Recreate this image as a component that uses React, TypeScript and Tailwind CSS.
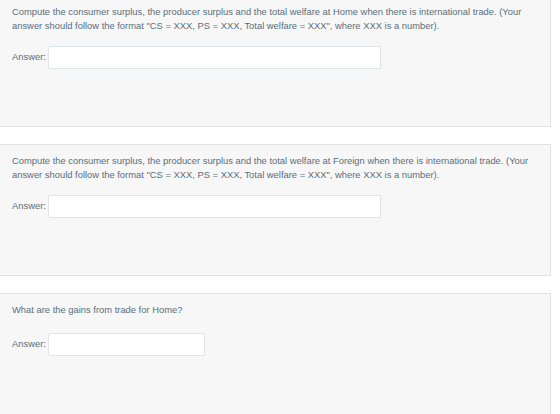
const FORMAT_NOTE =
  '(Your answer should follow the format "CS = XXX, PS = XXX, Total welfare = XXX", where XXX is a number).';

type Question = {
  id: string;
  prompt: string;
  inputWidth: string;
  gap: string;
};

const questions: Question[] = [
  {
    id: "q-home",
    prompt: `Compute the consumer surplus, the producer surplus and the total welfare at Home when there is international trade. ${FORMAT_NOTE}`,
    inputWidth: "w-[333px]",
    gap: "mt-[13px]",
  },
  {
    id: "q-foreign",
    prompt: `Compute the consumer surplus, the producer surplus and the total welfare at Foreign when there is international trade. ${FORMAT_NOTE}`,
    inputWidth: "w-[333px]",
    gap: "mt-[13px]",
  },
  {
    id: "q-gains",
    prompt: "What are the gains from trade for Home?",
    inputWidth: "w-[157px]",
    gap: "mt-[16px]",
  },
];

function QuestionCard({ q }: { q: Question }) {
  return (
    <div className="h-[132px] shrink-0 border-y border-r border-[#e2e2e2] bg-[#f7f7f7] pl-[12px] pr-[8px] pt-[9px]">
      <p className="text-[9.4px] leading-[14px] text-[#5a6d7a]">{q.prompt}</p>
      <div className={`${q.gap} flex items-center gap-[2px]`}>
        <label htmlFor={q.id} className="text-[9.4px] text-[#5a6d7a]">
          Answer:
        </label>
        <input
          id={q.id}
          type="text"
          className={`h-[23px] ${q.inputWidth} rounded-[2px] border border-[#dfe4e8] bg-white px-1 text-[10px] outline-none`}
        />
      </div>
    </div>
  );
}

export default function App() {
  return (
    <div
      className="h-[414px] w-[560px] overflow-hidden bg-white"
      style={{ fontFamily: '"Liberation Sans", Arial, sans-serif' }}
    >
      <div className="-mt-[5px] flex w-[551px] flex-col gap-[17px]">
        {questions.map((q) => (
          <QuestionCard key={q.id} q={q} />
        ))}
      </div>
    </div>
  );
}
